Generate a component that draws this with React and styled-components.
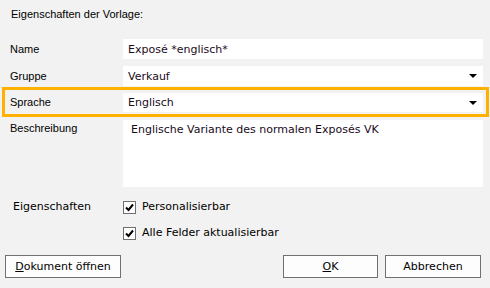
import React from 'react'
import styled, { createGlobalStyle } from 'styled-components'

const GlobalStyle = createGlobalStyle`
  html, body {
    margin: 0;
    padding: 0;
    background: #f2f2f2;
  }
`

const Dialog = styled.div`
  width: 490px;
  height: 288px;
  box-sizing: border-box;
  background: #f2f2f2;
  display: flex;
  flex-direction: column;
  font-family: 'Liberation Sans', Arial, sans-serif;
  font-size: 11px;
  color: #000;
`

const Title = styled.div`
  padding: 8px 0 0 11px;
  height: 31px;
  box-sizing: border-box;
  line-height: 13px;
`

const Row = styled.div`
  display: grid;
  grid-template-columns: 113px 360px;
  align-items: ${(p) => (p.$top ? 'start' : 'center')};
  margin: ${(p) => p.$margin || '0'};
  padding-left: 10px;
`

const Highlight = styled.div`
  display: grid;
  grid-template-columns: 113px 360px;
  align-items: center;
  margin: 1px 1px 3px 2px;
  padding: 3px 0 2px 5px;
  border: 3px solid #ffb000;
`

const Label = styled.div`
  line-height: 13px;
  padding-top: ${(p) => (p.$top ? '2px' : '0')};
`

const Field = styled.div`
  height: ${(p) => p.$height || 20}px;
  background: #fff;
  display: flex;
  align-items: ${(p) => (p.$multi ? 'flex-start' : 'center')};
  justify-content: space-between;
  padding: ${(p) => (p.$multi ? '3px 8px' : '0 6px 0 5px')};
  box-sizing: border-box;
  font-family: 'DejaVu Sans', Verdana, sans-serif;
  font-size: 11px;
  color: #1a0a1a;
`

const Arrow = styled.span`
  width: 0;
  height: 0;
  border-left: 4px solid transparent;
  border-right: 4px solid transparent;
  border-top: 4px solid #000;
`

const CheckGroup = styled.div`
  display: grid;
  grid-template-columns: 110px auto;
  row-gap: 12px;
  padding: 13px 0 0 13px;
  font-family: 'DejaVu Sans', Verdana, sans-serif;
  font-size: 11px;
`

const CheckLabel = styled.label`
  grid-column: 2;
  display: flex;
  align-items: center;
  gap: 6px;
  line-height: 14px;
`

const Box = styled.span`
  width: 11px;
  height: 11px;
  border: 1px solid #707070;
  background: #fff;
  display: flex;
  align-items: center;
  justify-content: center;
`

const Buttons = styled.div`
  display: flex;
  margin-top: auto;
  padding: 0 9px 10px 5px;
  gap: 7px;
`

const Button = styled.button`
  width: ${(p) => p.$width || 96}px;
  height: 23px;
  margin-left: ${(p) => (p.$push ? 'auto' : '0')};
  background: #fdfdfd;
  border: 1px solid #707070;
  border-radius: 0;
  padding: 0;
  font-family: 'DejaVu Sans', Verdana, sans-serif;
  font-size: 11px;
  color: #000;
`

function Check({ children }) {
  return (
    <CheckLabel>
      <Box>
        <svg width="9" height="9" viewBox="0 0 9 9">
          <path d="M1 4.5 L3.5 7 L8 1.5" fill="none" stroke="#000" strokeWidth="2" />
        </svg>
      </Box>
      {children}
    </CheckLabel>
  )
}

export default function App() {
  return (
    <Dialog>
      <GlobalStyle />
      <Title>Eigenschaften der Vorlage:</Title>
      <Row $margin="8px 0 0 0">
        <Label>Name</Label>
        <Field>Exposé *englisch*</Field>
      </Row>
      <Row $margin="7px 0 0 0">
        <Label>Gruppe</Label>
        <Field>
          Verkauf
          <Arrow />
        </Field>
      </Row>
      <Highlight>
        <Label>Sprache</Label>
        <Field $height={19}>
          Englisch
          <Arrow />
        </Field>
      </Highlight>
      <Row $top>
        <Label $top>Beschreibung</Label>
        <Field $multi $height={67}>
          Englische Variante des normalen Exposés VK
        </Field>
      </Row>
      <CheckGroup>
        <span>Eigenschaften</span>
        <Check>Personalisierbar</Check>
        <Check>Alle Felder aktualisierbar</Check>
      </CheckGroup>
      <Buttons>
        <Button $width={116}>
          <u>D</u>okument öffnen
        </Button>
        <Button $push $width={95}>
          <u>O</u>K
        </Button>
        <Button $width={96}>Abbrechen</Button>
      </Buttons>
    </Dialog>
  )
}
